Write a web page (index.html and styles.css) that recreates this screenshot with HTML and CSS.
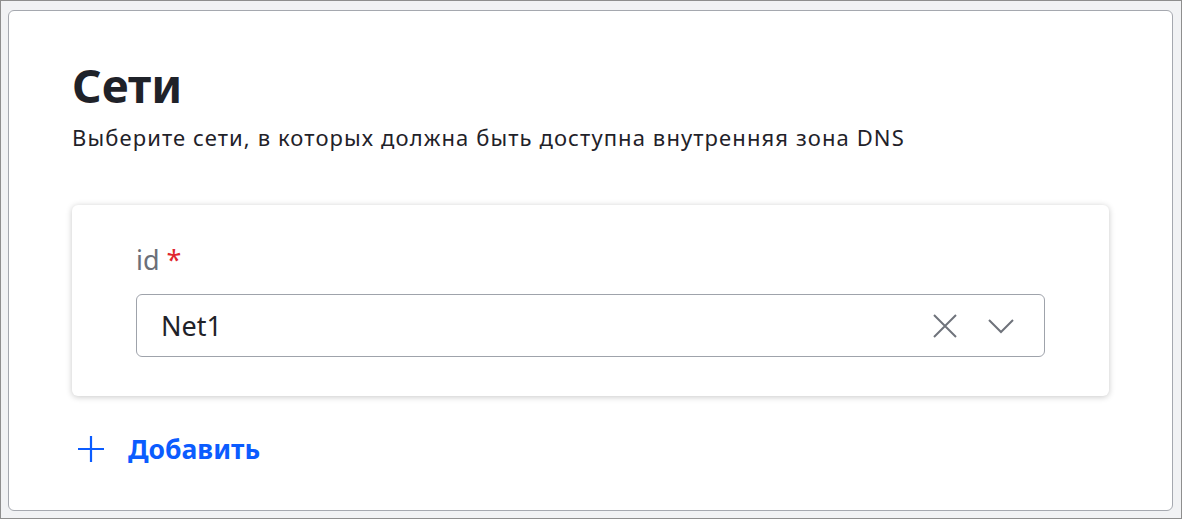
FILE: index.html
```html
<!DOCTYPE html>
<html lang="ru">
<head>
<meta charset="utf-8">
<link rel="stylesheet" href="styles.css">
</head>
<body>
<div class="frame">
  <section class="panel">
    <h1 class="title">Сети</h1>
    <p class="subtitle">Выберите сети, в которых должна быть доступна внутренняя зона DNS</p>
    <div class="item-card">
      <label class="field-label">id <span class="req">*</span></label>
      <div class="select">
        <span class="select-value">Net1</span>
        <span class="select-icons">
          <svg class="icon" width="26" height="26" viewBox="0 0 26 26"><path d="M2 2 L24 24 M24 2 L2 24" stroke="#6f737b" stroke-width="2" fill="none"/></svg>
          <svg class="icon" width="26" height="26" viewBox="0 0 26 26"><path d="M1 7 L13 19 L25 7" stroke="#6f737b" stroke-width="2" fill="none"/></svg>
        </span>
      </div>
    </div>
    <button class="add">
      <svg width="26" height="26" viewBox="0 0 26 26"><path d="M13 0 V26 M0 13 H26" stroke="#0b5cff" stroke-width="2.2" fill="none"/></svg>
      <span>Добавить</span>
    </button>
  </section>
</div>
</body>
</html>
```
FILE: styles.css
```css
* { box-sizing: border-box; }
html, body { margin: 0; padding: 0; }
body {
  width: 1182px;
  height: 519px;
  font-family: "Noto Sans", "Open Sans", sans-serif;
  color: #1f2229;
  background: #f1f2f4;
}
.frame {
  width: 1182px;
  height: 519px;
  border: 1px solid #8e8e8e;
  padding: 9px 8px 7px 7px;
}
.panel {
  height: 501px;
  background: #fff;
  border: 1px solid #a5a8af;
  border-radius: 6px;
  padding: 44px 63px 0 63px;
}
.title {
  margin: 0;
  font-size: 46px;
  line-height: 60px;
  font-weight: 700;
}
.subtitle {
  margin: 8px 0 0 0;
  font-size: 22px;
  letter-spacing: 1.1px;
  line-height: 28px;
}
.item-card {
  margin-top: 54px;
  height: 191px;
  background: #fff;
  border-radius: 6px;
  box-shadow: 0 1px 6px rgba(0,0,0,0.22);
  padding: 38px 64px 0 64px;
}
.field-label {
  display: block;
  font-size: 27px;
  line-height: 34px;
  color: #6b6f78;
}
.req { color: #e0262e; }
.select {
  margin-top: 17px;
  height: 63px;
  border: 1px solid #9fa3ab;
  border-radius: 6px;
  display: flex;
  align-items: center;
  padding: 0 30px 0 24px;
}
.select-value {
  flex: 1;
  font-size: 27px;
  color: #1f2229;
}
.select-icons {
  display: flex;
  gap: 30px;
  align-items: center;
}
.add {
  margin: 35px 0 0 6px;
  padding: 0;
  border: 0;
  background: none;
  display: flex;
  align-items: center;
  gap: 24px;
  font-family: inherit;
  font-size: 26.5px;
  font-weight: 700;
  color: #0b5cff;
}
```
